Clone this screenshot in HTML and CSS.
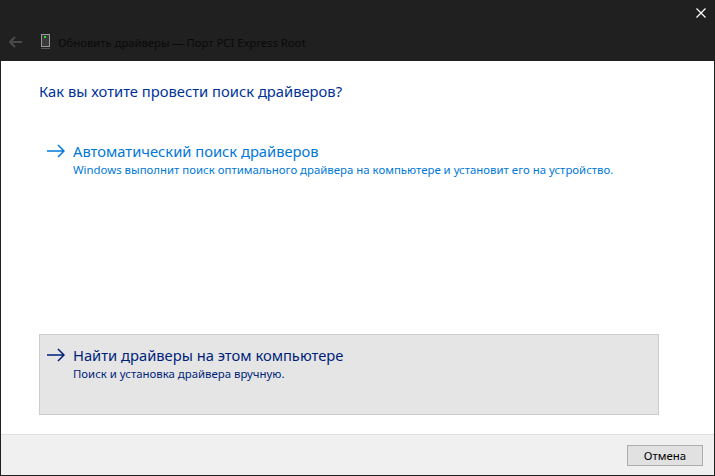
FILE: index.html
```html
<!DOCTYPE html>
<html lang="ru">
<head>
    <meta charset="UTF-8">
    <meta name="viewport" content="width=device-width, initial-scale=1.0">
    <title>Обновить драйверы</title>
    <link rel="stylesheet" href="styles.css">
</head>
<body>
<div class="window">
    <div class="titlebar">
        <div class="caption-row">
            <svg class="close-icon" width="10" height="10" viewBox="0 0 10 10">
                <path d="M0.5 0.5L9.5 9.5M9.5 0.5L0.5 9.5" stroke="#fff" stroke-width="1.2" fill="none"/>
            </svg>
        </div>
        <div class="nav-row">
            <svg class="back-icon" width="13" height="12" viewBox="0 0 13 12">
                <path d="M6 1L1 6L6 11M1 6H13" stroke="#4a4a4a" stroke-width="2" fill="none"/>
            </svg>
            <svg class="device-icon" width="9" height="16" viewBox="0 0 9 16">
                <rect x="0.5" y="0.5" width="8" height="12" fill="#3a3a3a" stroke="#9a9a9a"/>
                <rect x="3" y="2" width="2" height="2" fill="#22e022"/>
                <rect x="0" y="14" width="9" height="1" fill="#555"/>
            </svg>
            <span class="nav-title">Обновить драйверы — Порт PCI Express Root</span>
        </div>
    </div>

    <div class="content">
        <h1 class="heading">Как вы хотите провести поиск драйверов?</h1>

        <div class="option option-auto">
            <svg class="arrow" width="18" height="14" viewBox="0 0 18 14">
                <path d="M0 7H17M11 1L17 7L11 13" stroke="currentColor" stroke-width="1.5" fill="none"/>
            </svg>
            <div class="option-text">
                <div class="option-title">Автоматический поиск драйверов</div>
                <div class="option-desc">Windows выполнит поиск оптимального драйвера на компьютере и установит его на устройство.</div>
            </div>
        </div>

        <div class="option option-manual">
            <svg class="arrow" width="18" height="14" viewBox="0 0 18 14">
                <path d="M0 7H17M11 1L17 7L11 13" stroke="currentColor" stroke-width="1.5" fill="none"/>
            </svg>
            <div class="option-text">
                <div class="option-title">Найти драйверы на этом компьютере</div>
                <div class="option-desc">Поиск и установка драйвера вручную.</div>
            </div>
        </div>
    </div>

    <div class="footer">
        <button class="cancel-btn">Отмена</button>
    </div>
</div>
</body>
</html>
```

FILE: styles.css
```css
html, body {
    margin: 0;
    padding: 0;
    height: 100%;
}
body {
    font-family: "Noto Sans", "Open Sans", sans-serif;
    background-color: #fff;
}
.window {
    box-sizing: border-box;
    height: 476px;
    display: flex;
    flex-direction: column;
    border: 1px solid #202020;
    border-top: 0;
}
.titlebar {
    height: 61px;
    background-color: #202020;
    display: flex;
    flex-direction: column;
}
.caption-row {
    height: 28px;
    display: flex;
    justify-content: flex-end;
    align-items: flex-start;
    padding: 8px 8px 0 0;
    box-sizing: border-box;
}
.nav-row {
    height: 28px;
    display: flex;
    align-items: center;
    padding-left: 8px;
}
.back-icon {
    margin-right: 19px;
}
.device-icon {
    margin-right: 8px;
}
.nav-title {
    font-size: 11.27px;
    color: #0a0a0a;
}
.content {
    flex: 1;
    background-color: #fff;
    padding: 0 55px 0 38px;
    display: flex;
    flex-direction: column;
}
.heading {
    margin: 20px 0 29px;
    font-size: 14.75px;
    line-height: 20px;
    font-weight: 400;
    color: #003399;
}
.option {
    height: 81px;
    box-sizing: border-box;
    display: flex;
    align-items: flex-start;
    padding: 10px 0 0 7px;
    border: 1px solid transparent;
}
.option-auto {
    color: #0078d7;
    margin-bottom: 123px;
}
.option-manual {
    color: #001f7a;
    background-color: #e5e5e5;
    border-color: #cccccc;
}
.arrow {
    margin: 3px 8px 0 0;
    flex-shrink: 0;
}
.option-title {
    font-size: 14.72px;
    line-height: 20px;
    margin-bottom: 1px;
}
.option-desc {
    font-size: 11.4px;
    line-height: 16px;
}
.footer {
    height: 41px;
    box-sizing: border-box;
    background-color: #f0f0f0;
    border-top: 1px solid #dfdfdf;
    display: flex;
    justify-content: flex-end;
    align-items: flex-start;
    padding: 10px 11px 0 0;
}
.cancel-btn {
    width: 76px;
    height: 21px;
    padding: 0;
    font-family: inherit;
    font-size: 11.4px;
    color: #000;
    background-color: #e1e1e1;
    border: 1px solid #adadad;
}
```
